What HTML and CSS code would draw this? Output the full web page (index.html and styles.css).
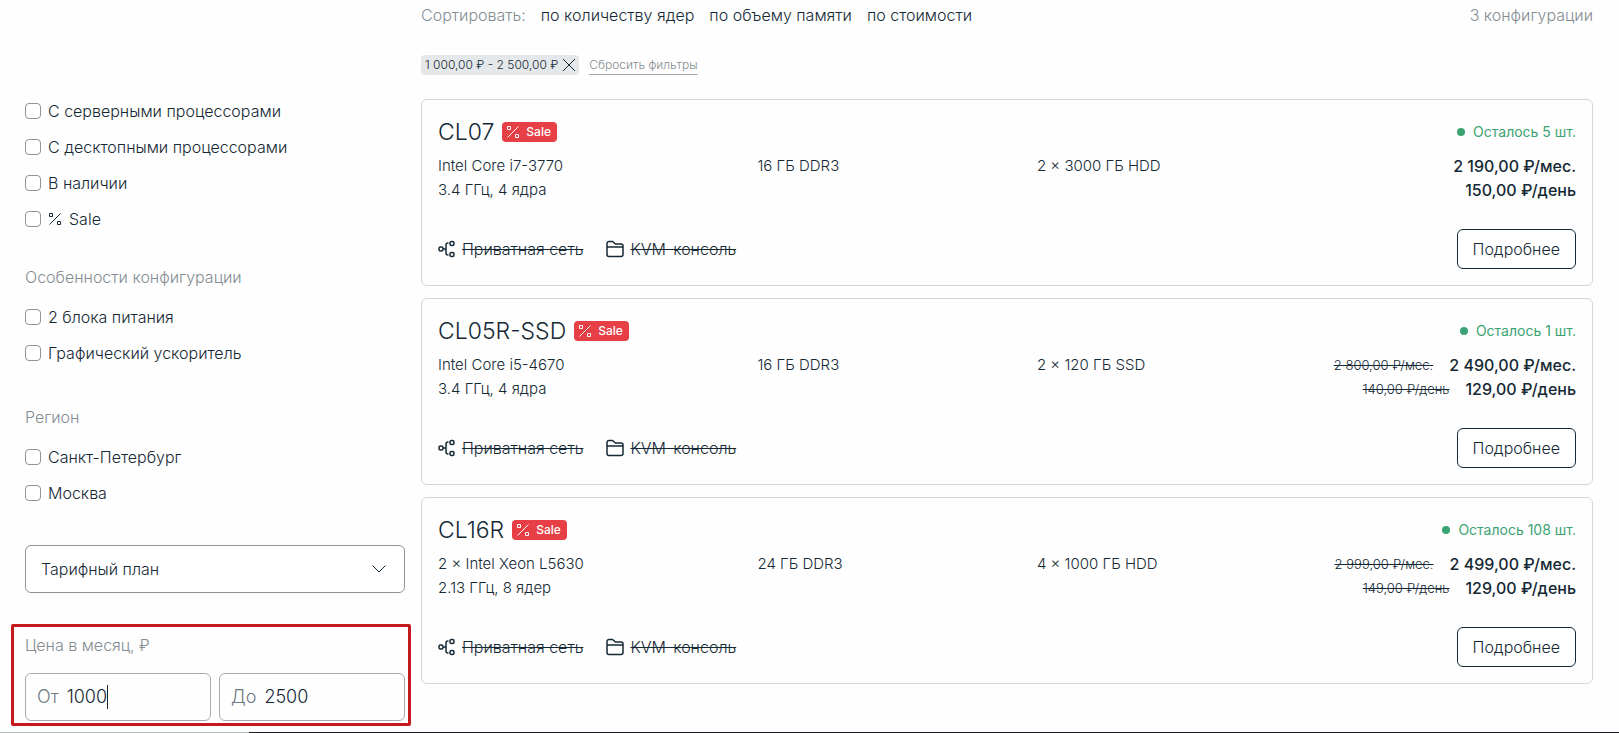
FILE: index.html
```html
<!DOCTYPE html>
<html lang="ru">
<head>
    <meta charset="UTF-8">
    <meta name="viewport" content="width=device-width, initial-scale=1.0">
    <title>Конфигурации серверов</title>
    <link rel="stylesheet" href="styles.css">
</head>
<body>
    <!-- Icons -->
    <svg class="sprite" aria-hidden="true">
        <symbol id="icon-percent" viewBox="0 0 14 14">
            <path d="M1.5 1.5h3v3h-3zM9.500 9.500h3v3h-3zM12.500 1.500l-11 11"/>
        </symbol>
        <symbol id="icon-network" viewBox="0 0 18 18">
            <rect x="1" y="7" width="4" height="4" rx="1.5"/>
            <rect x="12" y="1.5" width="4" height="4" rx="1.5"/>
            <rect x="12" y="12.5" width="4" height="4" rx="1.5"/>
            <path d="M5 9h3M10.5 3H10a2 2 0 0 0-2 2v8a2 2 0 0 0 2 2h.5"/>
        </symbol>
        <symbol id="icon-folder" viewBox="0 0 18 18">
            <path d="M1 14.5v-11a2 2 0 0 1 2-2h3.500l3 2.500h5.500a2 2 0 0 1 2 2v8.500a2 2 0 0 1-2 2h-12a2 2 0 0 1-2-2zM1 7h16"/>
        </symbol>
        <symbol id="icon-close" viewBox="0 0 14 14">
            <path d="M1 1l12 12M13 1L1 13"/>
        </symbol>
        <symbol id="icon-chevron" viewBox="0 0 16 16">
            <path d="M1.5 4.5L8 11l6.500-6.500"/>
        </symbol>
    </svg>

    <div class="page">
        <aside class="sidebar">
            <form class="filters">
                <div class="filter-group">
                    <label class="check"><input type="checkbox">С серверными процессорами</label>
                    <label class="check"><input type="checkbox">С десктопными процессорами</label>
                    <label class="check"><input type="checkbox">В наличии</label>
                    <label class="check"><input type="checkbox"><svg class="icon-percent"><use href="#icon-percent"/></svg>Sale</label>
                </div>

                <div class="filter-group features-group">
                    <h4 class="filter-title">Особенности конфигурации</h4>
                    <label class="check"><input type="checkbox">2 блока питания</label>
                    <label class="check"><input type="checkbox">Графический ускоритель</label>
                </div>

                <div class="filter-group region-group">
                    <h4 class="filter-title">Регион</h4>
                    <label class="check"><input type="checkbox">Санкт-Петербург</label>
                    <label class="check"><input type="checkbox">Москва</label>
                </div>

                <div class="plan">
                    <select class="plan-select" aria-label="Тарифный план">
                        <option>Тарифный план</option>
                    </select>
                    <svg class="plan-arrow"><use href="#icon-chevron"/></svg>
                </div>

                <div class="price-filter">
                    <h4 class="filter-title">Цена в месяц, ₽</h4>
                    <div class="price-fields">
                        <label class="price-field">От <input type="text" value="1000" size="4"><span class="caret"></span></label>
                        <label class="price-field">До <input type="text" value="2500" size="4"></label>
                    </div>
                </div>
            </form>
        </aside>

        <main class="content">
            <div class="sort">
                <span class="muted">Сортировать:</span>
                <a href="#">по количеству ядер</a>
                <a href="#">по объему памяти</a>
                <a href="#">по стоимости</a>
                <span class="muted sort-count">3 конфигурации</span>
            </div>

            <div class="applied">
                <button type="button" class="chip">1 000,00 ₽ - 2 500,00 ₽ <svg class="icon-close"><use href="#icon-close"/></svg></button>
                <a href="#" class="reset">Сбросить фильтры</a>
            </div>

            <div class="server-list">
                <article class="server">
                    <header class="server-head">
                        <h3>CL07</h3>
                        <span class="sale"><svg class="icon-percent"><use href="#icon-percent"/></svg>Sale</span>
                        <span class="stock">Осталось 5 шт.</span>
                    </header>
                    <div class="specs">
                        <p>Intel Core i7-3770<br>3.4 ГГц, 4 ядра</p>
                        <p>16 ГБ DDR3</p>
                        <p>2 × 3000 ГБ HDD</p>
                        <div class="prices">
                            <p><b>2 190,00 ₽/мес.</b></p>
                            <p><b>150,00 ₽/день</b></p>
                        </div>
                    </div>
                    <footer class="server-foot">
                        <span class="option"><svg><use href="#icon-network"/></svg><s>Приватная сеть</s></span>
                        <span class="option"><svg><use href="#icon-folder"/></svg><s>KVM-консоль</s></span>
                        <button type="button" class="more">Подробнее</button>
                    </footer>
                </article>

                <article class="server">
                    <header class="server-head">
                        <h3>CL05R-SSD</h3>
                        <span class="sale"><svg class="icon-percent"><use href="#icon-percent"/></svg>Sale</span>
                        <span class="stock">Осталось 1 шт.</span>
                    </header>
                    <div class="specs">
                        <p>Intel Core i5-4670<br>3.4 ГГц, 4 ядра</p>
                        <p>16 ГБ DDR3</p>
                        <p>2 × 120 ГБ SSD</p>
                        <div class="prices">
                            <p><s>2 800,00 ₽/мес.</s><b>2 490,00 ₽/мес.</b></p>
                            <p><s>140,00 ₽/день</s><b>129,00 ₽/день</b></p>
                        </div>
                    </div>
                    <footer class="server-foot">
                        <span class="option"><svg><use href="#icon-network"/></svg><s>Приватная сеть</s></span>
                        <span class="option"><svg><use href="#icon-folder"/></svg><s>KVM-консоль</s></span>
                        <button type="button" class="more">Подробнее</button>
                    </footer>
                </article>

                <article class="server">
                    <header class="server-head">
                        <h3>CL16R</h3>
                        <span class="sale"><svg class="icon-percent"><use href="#icon-percent"/></svg>Sale</span>
                        <span class="stock">Осталось 108 шт.</span>
                    </header>
                    <div class="specs">
                        <p>2 × Intel Xeon L5630<br>2.13 ГГц, 8 ядер</p>
                        <p>24 ГБ DDR3</p>
                        <p>4 × 1000 ГБ HDD</p>
                        <div class="prices">
                            <p><s>2 999,00 ₽/мес.</s><b>2 499,00 ₽/мес.</b></p>
                            <p><s>149,00 ₽/день</s><b>129,00 ₽/день</b></p>
                        </div>
                    </div>
                    <footer class="server-foot">
                        <span class="option"><svg><use href="#icon-network"/></svg><s>Приватная сеть</s></span>
                        <span class="option"><svg><use href="#icon-folder"/></svg><s>KVM-консоль</s></span>
                        <button type="button" class="more">Подробнее</button>
                    </footer>
                </article>
            </div>
        </main>
    </div>
    <div class="bottom-bar"></div>
</body>
</html>
```
FILE: styles.css
```css
/* --- Base Styles --- */
* {
    box-sizing: border-box;
}

body {
    margin: 0;
    min-height: 100vh;
    display: flex;
    flex-direction: column;
    background-color: #fefefe;
    color: #152935;
    font-family: Inter, "Open Sans", sans-serif;
    font-size: 16px;
    font-weight: 300;
    line-height: 24px;
}

h3,
h4,
p {
    margin: 0;
    font-weight: 300;
}

a {
    color: inherit;
    text-decoration: none;
}

button,
input,
select {
    font: inherit;
    color: inherit;
}

svg {
    fill: none;
    stroke: currentColor;
    flex-shrink: 0;
}

.sprite {
    display: none;
}

.page {
    display: grid;
    grid-template-columns: 400px 1fr;
    gap: 10px;
    padding: 0 26px 0 11px;
}

.muted,
.filter-title {
    color: #848d92;
    font-size: 16px;
}

/* --- Filters --- */
.filters {
    padding-top: 99px;
}

.filter-group {
    display: flex;
    flex-direction: column;
    gap: 12px;
    padding-left: 14px;
}

.filter-group .filter-title {
    margin-bottom: 4px;
}

.features-group {
    margin-top: 34px;
}

.region-group {
    margin-top: 40px;
}

.check {
    display: flex;
    align-items: center;
    gap: 7px;
}

.check input {
    appearance: none;
    width: 16px;
    height: 16px;
    margin: 0;
    border: 1px solid #8b9499;
    border-radius: 4px;
    background-color: #fff;
}

.icon-percent {
    width: 14px;
    height: 14px;
}

.plan {
    position: relative;
    margin: 40px 6px 31px 14px;
}

.plan-select {
    appearance: none;
    display: block;
    width: 100%;
    height: 48px;
    padding: 0 15px;
    border: 1px solid #8b9499;
    border-radius: 6px;
    background-color: #fff;
}

.plan-arrow {
    position: absolute;
    top: 16px;
    right: 18px;
    width: 16px;
    height: 16px;
    pointer-events: none;
}

.price-filter {
    padding: 6px 3px 2px 11px;
    border: 3px solid #c4191d;
    border-radius: 2px;
}

.price-fields {
    display: grid;
    grid-template-columns: 1fr 1fr;
    gap: 8px;
    margin-top: 16px;
}

.price-field {
    display: flex;
    align-items: center;
    height: 48px;
    padding: 0 11px;
    border: 1px solid #a6adb0;
    border-radius: 6px;
    color: #6f7a80;
    font-size: 18px;
}

.price-field input {
    field-sizing: content;
    margin-left: 8px;
    padding: 0;
    border: 0;
    outline: 0;
    background: none;
    color: #152935;
}

.caret {
    width: 1px;
    height: 24px;
    background-color: #152935;
}

/* --- Sorting and applied filters --- */
.sort {
    display: flex;
    gap: 15px;
    padding-top: 3px;
}

.sort-count {
    margin-left: auto;
}

.applied {
    display: flex;
    align-items: center;
    gap: 10px;
    margin: 28px 0 24px;
    font-size: 12px;
    line-height: 20px;
}

.chip {
    display: flex;
    align-items: center;
    gap: 4px;
    height: 20px;
    padding: 0 3px 0 4px;
    border: 0;
    border-radius: 4px;
    background-color: #e5e8ea;
}

.icon-close {
    width: 14px;
    height: 14px;
}

.reset {
    height: 20px;
    border-bottom: 1px solid #a6adb0;
    color: #848d92;
}

/* --- Server cards --- */
.server-list {
    display: flex;
    flex-direction: column;
    gap: 12px;
}

.server {
    padding: 16px;
    border: 1px solid #d3d7d9;
    border-radius: 6px;
}

.server-head {
    display: flex;
    align-items: center;
    gap: 8px;
    margin-bottom: 6px;
}

.server-head h3 {
    font-size: 23px;
    line-height: 32px;
}

.sale {
    display: flex;
    align-items: center;
    gap: 6px;
    height: 20px;
    padding: 0 6px 0 4px;
    border-radius: 4px;
    background-color: #e63f46;
    color: #fff;
    font-size: 12px;
    font-weight: 500;
}

.stock {
    display: flex;
    align-items: center;
    gap: 8px;
    margin-left: auto;
    color: #3ba372;
    font-size: 14px;
    font-weight: 400;
}

.stock::before {
    content: "";
    width: 8px;
    height: 8px;
    border-radius: 50%;
    background-color: #3ba372;
}

.specs {
    display: grid;
    grid-template-columns: 32fr 28fr 24fr 30fr;
    font-size: 15px;
}

.prices {
    font-size: 16px;
    white-space: nowrap;
}

.prices p {
    display: flex;
    justify-content: flex-end;
    gap: 16px;
}

.prices b {
    font-weight: 500;
}

.prices s {
    font-size: 13px;
}

.server-foot {
    display: flex;
    align-items: center;
    gap: 23px;
    margin-top: 27px;
}

.option {
    display: flex;
    align-items: center;
    gap: 6px;
}

.option svg {
    width: 18px;
    height: 18px;
    stroke-width: 1.5;
}

.more {
    height: 40px;
    margin-left: auto;
    padding: 0 15px;
    border: 1px solid #152935;
    border-radius: 6px;
    background-color: #fff;
    cursor: pointer;
}

/* --- Bottom edge --- */
.bottom-bar {
    height: 1px;
    margin-top: auto;
    background: linear-gradient(to right, #b9bdb9 249px, #1b1b1f 249px);
}
```
